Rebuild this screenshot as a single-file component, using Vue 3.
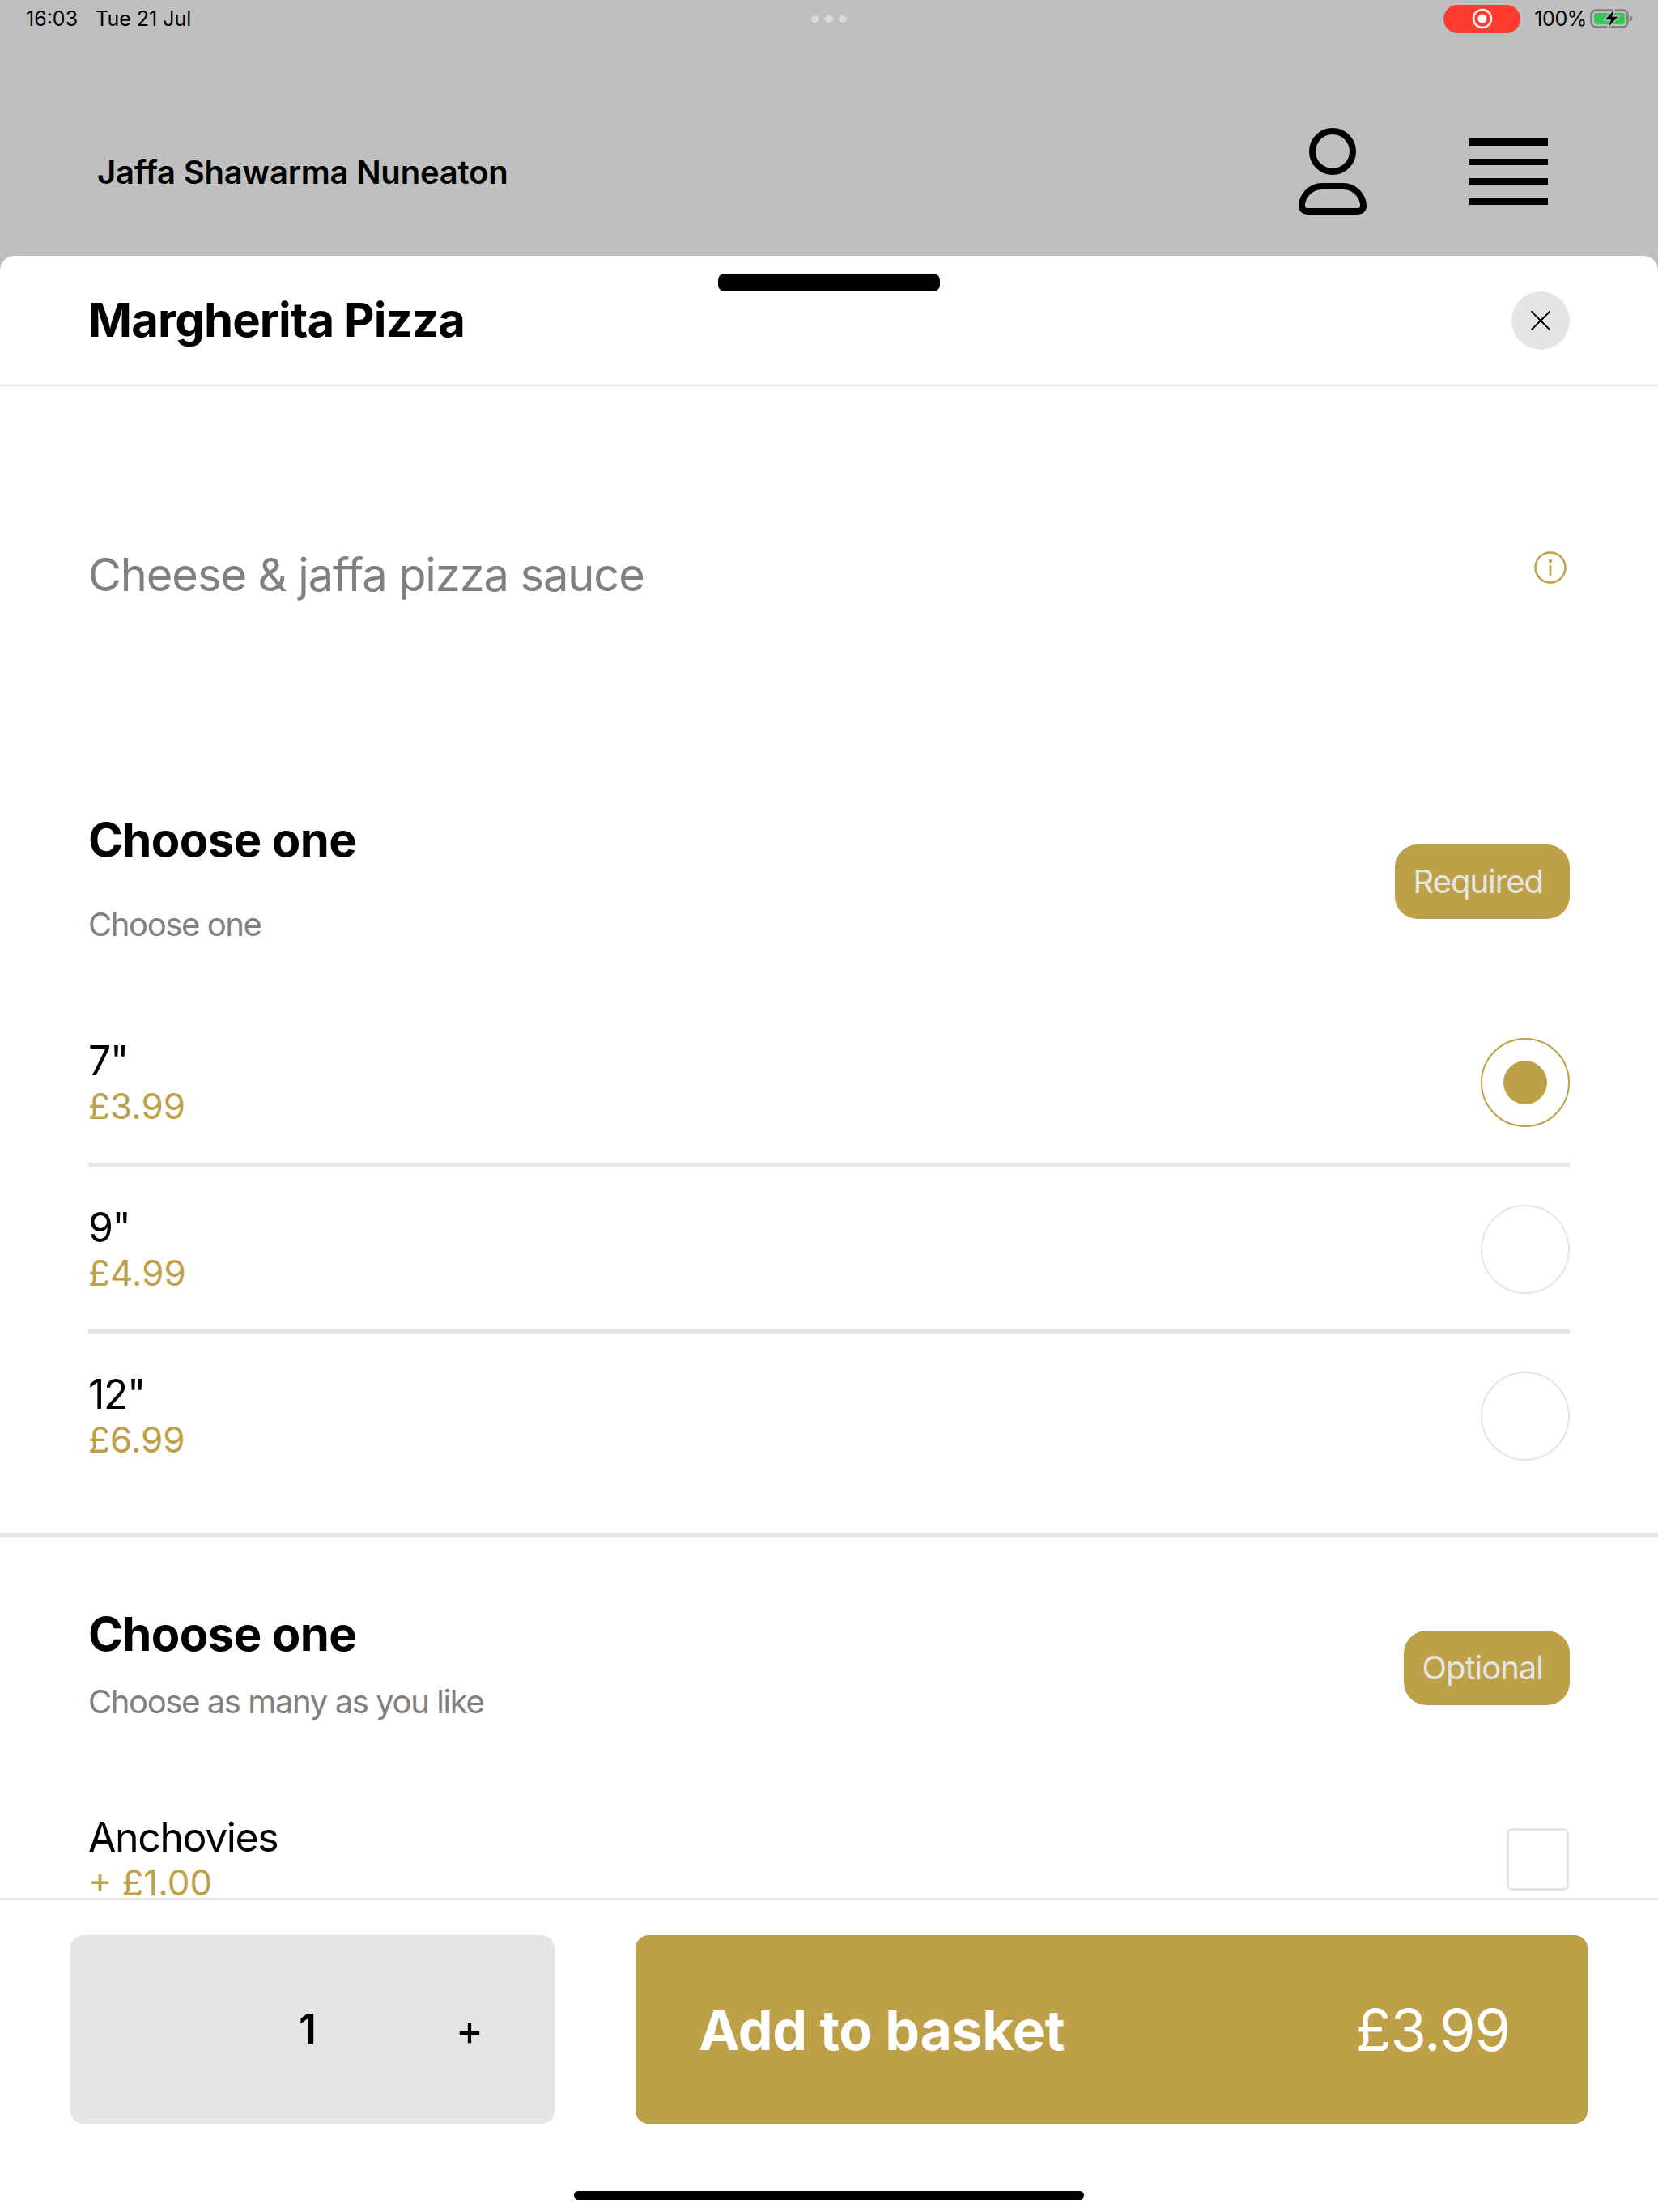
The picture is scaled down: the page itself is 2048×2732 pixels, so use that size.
<script setup>
const sizes = [
  { name: '7"', price: '£3.99', selected: true },
  { name: '9"', price: '£4.99', selected: false },
  { name: '12"', price: '£6.99', selected: false },
]
</script>

<template>
  <div class="screen">
    <div class="backdrop">
      <div class="status">
        <div class="clock"><span>16:03</span><span>Tue 21 Jul</span></div>
        <div class="dots"><i></i><i></i><i></i></div>
        <div class="system">
          <div class="record">
            <svg width="26" height="26" viewBox="0 0 26 26">
              <circle cx="13" cy="13" r="11" fill="none" stroke="#fff" stroke-width="2.5" />
              <circle cx="13" cy="13" r="5.5" fill="#fff" />
            </svg>
          </div>
          <span class="level">100%</span>
          <svg class="battery" width="54" height="26" viewBox="0 0 54 26">
            <rect x="1.5" y="2.5" width="45" height="21" rx="6" fill="none" stroke="#7d7d7d" stroke-width="2.4" />
            <rect x="5" y="6" width="38" height="14" rx="3" fill="#34c759" />
            <path d="M49 9.5c2.4.6 3.6 2 3.6 3.5s-1.2 2.9-3.6 3.5z" fill="#7d7d7d" />
            <path d="M31 0 17 15h8l-4 11 15-16h-8l3-10z" fill="#000" stroke="#bfbfbf" stroke-width="1.4" />
          </svg>
        </div>
      </div>
      <div class="nav">
        <div class="brand">Jaffa Shawarma Nuneaton</div>
        <div class="nav-actions">
          <svg class="person" width="84" height="108" viewBox="0 0 84 108" fill="none" stroke="#000" stroke-width="8">
            <circle cx="42" cy="29" r="25" />
            <path d="M29 72h26c14 0 25 12 25 24.500 0 4-3 6.500-7 6.500H11c-4 0-7-2.500-7-6.500C4 84 15 72 29 72z" />
          </svg>
          <div class="burger"><i></i><i></i><i></i><i></i></div>
        </div>
      </div>
    </div>

    <div class="sheet">
      <div class="grip"></div>
      <header class="sheet-head">
        <h1>Margherita Pizza</h1>
        <button class="close" type="button" aria-label="Close">
          <svg width="26" height="26" viewBox="0 0 26 26" stroke="#000" stroke-width="2" stroke-linecap="round">
            <path d="M2 2l22 22M24 2 2 24" />
          </svg>
        </button>
      </header>

      <div class="scroller">
        <div class="intro">
          <p>Cheese &amp; jaffa pizza sauce</p>
          <svg class="info" width="40" height="40" viewBox="0 0 40 40">
            <circle cx="20" cy="20" r="18.500" fill="none" stroke="#bda047" stroke-width="2.500" />
            <circle cx="20" cy="12" r="2.200" fill="#bda047" />
            <path d="M20 18v11" stroke="#bda047" stroke-width="2.600" stroke-linecap="round" />
          </svg>
        </div>

        <section class="group group-size">
          <div class="group-head">
            <div class="group-copy">
              <h2>Choose one</h2>
              <p>Choose one</p>
            </div>
            <span class="tag">Required</span>
          </div>
          <div class="options">
            <div v-for="size in sizes" :key="size.name" class="option">
              <div class="option-copy">
                <div class="option-name">{{ size.name }}</div>
                <div class="option-price">{{ size.price }}</div>
              </div>
              <div class="radio" :class="{ on: size.selected }"><i v-if="size.selected"></i></div>
            </div>
          </div>
        </section>

        <section class="group group-extras">
          <div class="group-head">
            <div class="group-copy tight">
              <h2>Choose one</h2>
              <p>Choose as many as you like</p>
            </div>
            <span class="tag">Optional</span>
          </div>
          <div class="extra">
            <div class="option-copy">
              <div class="option-name">Anchovies</div>
              <div class="option-price">+ £1.00</div>
            </div>
            <div class="check"></div>
          </div>
        </section>
      </div>

      <footer class="actions">
        <div class="stepper">
          <span class="qty">1</span>
          <span class="plus">+</span>
        </div>
        <button class="add" type="button">
          <span class="add-label">Add to basket</span>
          <span class="add-price">£3.99</span>
        </button>
      </footer>
      <div class="home-bar"></div>
    </div>
  </div>
</template>

<style scoped>
.screen {
  width: 2048px;
  height: 2732px;
  display: flex;
  flex-direction: column;
  background: #bfbfbf;
  font-family: Inter, "Liberation Sans", sans-serif;
  color: #000;
  overflow: hidden;
}
h1, h2, p { margin: 0; }
i { display: block; }

.backdrop { height: 316px; flex: none; display: flex; flex-direction: column; }
.status {
  height: 46px;
  position: relative;
  display: flex;
  align-items: center;
  justify-content: space-between;
  padding: 0 30px 0 32px;
  font-size: 25px;
}
.clock { display: flex; gap: 22px; }
.dots { position: absolute; left: 1002px; top: 19px; display: flex; gap: 7px; }
.dots i { width: 10px; height: 9px; border-radius: 50%; background: #d9d9d9; }
.system { display: flex; align-items: center; }
.record {
  width: 95px;
  height: 35px;
  border-radius: 18px;
  background: #ff3b30;
  display: flex;
  align-items: center;
  justify-content: center;
  margin-right: 17px;
  margin-left: -2px;
}
.level { margin-right: 4px; letter-spacing: -0.4px; }
.nav {
  flex: 1;
  display: flex;
  align-items: center;
  justify-content: space-between;
  padding: 62px 136px 0 120px;
}
.brand { font-size: 40px; font-weight: 600; letter-spacing: -0.2px; }
.nav-actions { display: flex; align-items: center; gap: 126px; }
.person { display: block; }
.burger { width: 98px; display: flex; flex-direction: column; gap: 16px; }
.burger i { height: 8.500px; background: #000; }

.sheet {
  flex: 1;
  min-height: 0;
  position: relative;
  display: flex;
  flex-direction: column;
  background: #fff;
  border-radius: 18px 18px 0 0;
}
.grip {
  position: absolute;
  left: 887px;
  top: 22px;
  width: 274px;
  height: 22px;
  border-radius: 8px;
  background: #000;
}
.sheet-head {
  height: 159px;
  flex: none;
  display: flex;
  align-items: center;
  justify-content: space-between;
  padding: 0 109px;
  border-bottom: 2px solid #e5e5e5;
}
h1 { font-size: 58px; font-weight: 700; letter-spacing: -0.9px; margin-top: -2px; }
.close {
  width: 72px;
  height: 72px;
  padding: 0;
  border: 0;
  border-radius: 50%;
  background: #e5e5e5;
  display: flex;
  align-items: center;
  justify-content: center;
}

.scroller { flex: 1; min-height: 0; overflow: hidden; }
.intro {
  display: flex;
  justify-content: space-between;
  padding: 198px 113px 0 109px;
}
.intro p { font-size: 56px; line-height: 70px; color: #808080; letter-spacing: -1.1px; }
.info { margin-top: 6px; flex: none; }

.group { padding: 0 109px; }
.group-size { margin-top: 257px; border-bottom: 5px solid #e5e5e5; padding-bottom: 45px; }
.group-extras { padding-top: 85px; }
.group-head { display: flex; align-items: center; justify-content: space-between; }
.group-copy h2 { font-size: 58px; line-height: 70px; font-weight: 700; letter-spacing: -0.6px; }
.group-copy p { margin-top: 45px; font-size: 40px; line-height: 50px; color: #808080; letter-spacing: -1.4px; }
.group-copy.tight p { margin-top: 24px; }
.tag {
  height: 92px;
  margin-top: 9px;
  padding: 0 33px 0 22px;
  border-radius: 28px;
  background: #bda047;
  color: #e5e5e5;
  font-size: 40px;
  line-height: 92px;
  letter-spacing: -1px;
}

.options { margin-top: 68px; }
.option {
  height: 201px;
  display: flex;
  align-items: center;
  justify-content: space-between;
  border-bottom: 5px solid #e5e5e5;
}
.option:last-child { border-bottom: 0; }
.option-name { font-size: 50px; line-height: 60px; letter-spacing: -1.4px; }
.option-price { font-size: 44px; line-height: 52px; color: #bda047; }
.radio {
  width: 110px;
  height: 110px;
  margin-top: 2px;
  box-sizing: border-box;
  border-radius: 50%;
  border: 2px solid #e5e5e5;
  display: flex;
  align-items: center;
  justify-content: center;
}
.radio.on { border-color: #bda047; }
.radio i { width: 54px; height: 54px; border-radius: 50%; background: #bda047; }
.extra { margin-top: 112px; display: flex; justify-content: space-between; }
.check {
  width: 77px;
  height: 77px;
  box-sizing: border-box;
  margin-top: 19px;
  margin-right: 1px;
  border: 3px solid #e5e5e5;
  border-radius: 7px;
}

.actions {
  height: 320px;
  flex: none;
  box-sizing: border-box;
  border-top: 3px solid #e5e5e5;
  padding: 43px 87px 0;
  display: flex;
  justify-content: space-between;
}
.stepper {
  width: 598px;
  height: 233px;
  border-radius: 16px;
  background: #e5e5e5;
  display: grid;
  grid-template-columns: 273px 40px 160px 40px;
  align-items: center;
  justify-items: center;
}
.qty { grid-column: 2; font-size: 52px; font-weight: 600; }
.plus { grid-column: 4; font-size: 52px; margin-top: 2px; }
.add {
  width: 1176px;
  height: 233px;
  border: 0;
  border-radius: 16px;
  background: #bda047;
  color: #fff;
  display: flex;
  align-items: center;
  justify-content: space-between;
  padding: 0 96px 0 78px;
  font-family: inherit;
}
.add-label { font-size: 68px; font-weight: 700; letter-spacing: -0.4px; }
.add-price { font-size: 72px; font-weight: 400; letter-spacing: -1.2px; }
.home-bar {
  width: 630px;
  height: 11px;
  margin: 42px auto 15px;
  border-radius: 6px;
  background: #000;
  flex: none;
}
</style>
